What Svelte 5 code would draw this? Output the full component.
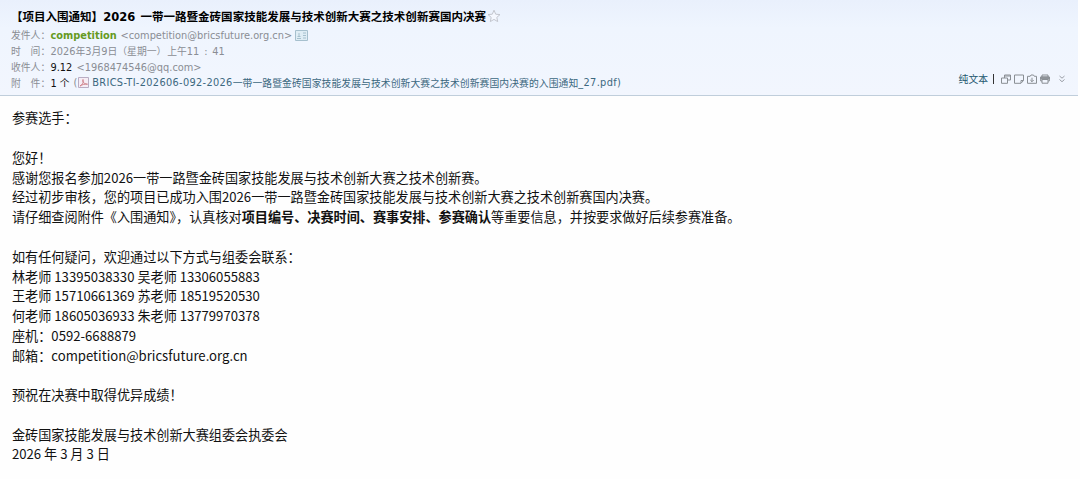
<script lang="ts">
    const body = [
        '参赛选手：',
        '',
        '您好！',
        '感谢您报名参加2026一带一路暨金砖国家技能发展与技术创新大赛之技术创新赛。',
        '经过初步审核，您的项目已成功入围2026一带一路暨金砖国家技能发展与技术创新大赛之技术创新赛国内决赛。'
    ]
    const contact = [
        '',
        '如有任何疑问，欢迎通过以下方式与组委会联系：',
        '林老师 13395038330 吴老师 13306055883',
        '王老师 15710661369 苏老师 18519520530',
        '何老师 18605036933 朱老师 13779970378',
        '座机：0592-6688879',
        '邮箱：competition@bricsfuture.org.cn',
        '',
        '预祝在决赛中取得优异成绩！',
        '',
        '金砖国家技能发展与技术创新大赛组委会执委会',
        '2026 年 3 月 3 日'
    ]
</script>

<div class="mail">
    <header>
        <h1>
            <span class="lead">【项目入围通知】2026</span><span class="subject">一带一路暨金砖国家技能发展与技术创新大赛之技术创新赛国内决赛</span>
            <svg class="star" viewBox="0 0 14 14"><path d="M7 1.2 8.7 5.2 13 5.6 9.8 8.4 10.7 12.6 7 10.4 3.3 12.6 4.2 8.4 1 5.6 5.3 5.2Z" /></svg>
        </h1>
        <div class="row">
            <span class="label">发件人：</span><b class="sender">competition</b><span class="from">&lt;competition@bricsfuture.org.cn&gt;</span>
            <svg class="card" viewBox="0 0 13 11"><path class="fill" d="M.5.5h12v10H.5z" /><path d="M2 8.5h4M4 3v3M2.5 6.5h3M8 3h3M8 5.5h3M8 8h3" /></svg>
        </div>
        <div class="row">
            <span class="label">时　间：</span><span class="date">2026年3月9日（星期一）</span><span class="time">上午11</span><span class="colon">:</span><span>41</span>
        </div>
        <div class="row">
            <span class="label">收件人：</span><span class="name">9.12</span><span class="to">&lt;1968474546@qq.com&gt;</span>
        </div>
        <div class="row last">
            <span class="label">附　件：</span><span class="count">1 个</span><span class="paren">(</span>
            <svg class="pdf" viewBox="0 0 13 13"><path class="page" d="M1.5 1.5h10v10h-10z" /><path class="mark" d="M3 10c3-1.5 3.8-4.3 3-6.5-1.2 2 1 4.5 4.5 4.7C8 7.8 5 8.6 3 10Z" /></svg>
            <span class="file">BRICS-TI-202606-092-2026</span><span class="file cn">一带一路暨金砖国家技能发展与技术创新大赛之技术创新赛国内决赛的入围通知</span><span class="file end">_27.pdf)</span>
            <div class="tools">
                <span class="plain">纯文本</span>
                <i></i>
                <svg viewBox="0 0 10 10"><path d="M3.5 4V1h6v5h-3M.5 4h6v5.3h-6zM3.5 2h6" /></svg>
                <svg viewBox="0 0 10 10"><path d="M.5 1h9v5.5L7 9.3H.5zM9.3 6.5H7V9" /></svg>
                <svg viewBox="0 0 10 10"><path d="M.5 9.3V2.3h2.7L4 1h2.5l.8 1.3h2.2v7zM5 3.7v4M3.3 6 5 7.7 6.7 6" /></svg>
                <svg viewBox="0 0 10 10"><path d="M2 3V1h6v2M2 7H.7V3h8.6v4H8M2 5.5h6v3.7H2z" /><path class="solid" d="M.7 3h8.6v2H.7z" /></svg>
                <svg class="more" viewBox="0 0 10 10"><path d="M2.5 2 5 4.2 7.5 2M2.5 5.5 5 7.7 7.5 5.5" /></svg>
            </div>
        </div>
    </header>

    <main>
        {#each body as line}
            <p>{line}</p>
        {/each}
        <p>请仔细查阅附件《入围通知》，认真核对<b>项目编号、决赛时间、赛事安排、参赛确认</b>等重要信息，并按要求做好后续参赛准备。</p>
        {#each contact as line}
            <p>{line}</p>
        {/each}
    </main>
</div>

<style>
    :global(body) {
        margin: 0;
        background: #fefefe;
    }
    .mail {
        height: 479px;
        overflow: hidden;
        background: #fefefe;
    }
    header {
        box-sizing: border-box;
        width: 1078px;
        height: 96px;
        padding: 6px 0 0 11px;
        border-bottom: 1px solid #c0cedb;
        background: linear-gradient(to bottom, #e9f0fc, #eff5fe 30%, #f2f6fe);
        font-family: "DejaVu Sans", "Noto Sans CJK SC", sans-serif;
        font-size: 9.8px;
        color: #8a8d94;
    }
    h1 {
        display: flex;
        align-items: center;
        height: 20px;
        margin: 0;
        font-size: 11.52px;
        font-weight: bold;
        color: #000;
        white-space: nowrap;
    }
    .lead {
        width: 129.5px;
    }
    .star {
        width: 14px;
        height: 14px;
        margin-left: 1px;
        fill: #f5f8ff;
        stroke: #c3c6ce;
    }
    .row {
        display: flex;
        align-items: center;
        height: 16px;
        white-space: nowrap;
    }
    .row:nth-of-type(1) {
        margin-top: 1px;
    }
    .row.last {
        height: 15px;
    }
    .label {
        width: 39.5px;
    }
    .sender {
        width: 70px;
        color: #669a22;
    }
    .from {
        width: 174px;
    }
    .card {
        width: 13px;
        height: 11px;
        fill: none;
        stroke: #a6c0ce;
    }
    .card .fill {
        fill: #dfedf5;
    }
    .time {
        margin-left: 1px;
    }
    .colon {
        width: 13px;
        text-align: center;
    }
    .name {
        width: 26px;
        color: #111;
    }
    .count {
        width: 23px;
        color: #111;
    }
    .pdf {
        width: 13px;
        height: 13px;
        margin-right: 2px;
        fill: none;
    }
    .page {
        fill: #f6edf5;
        stroke: #b9adc3;
    }
    .mark {
        stroke: #d0848d;
    }
    .file {
        letter-spacing: .32px;
        color: #3c687f;
    }
    .cn {
        letter-spacing: .08px;
    }
    .tools {
        display: flex;
        align-items: center;
        gap: 3px;
        margin: -7px 11px 0 auto;
    }
    .plain {
        color: #23566e;
    }
    .tools i {
        width: 1px;
        height: 10px;
        margin: 0 4px 0 2px;
        background: #333;
    }
    .tools svg {
        width: 10px;
        height: 10px;
        fill: none;
        stroke: #8a8f94;
    }
    .tools .solid {
        fill: #92979d;
    }
    .tools .more {
        margin-left: 4px;
        stroke: #9a9ea6;
    }
    main {
        padding: 12.4px 12px 0;
        font-family: "Noto Sans CJK SC", sans-serif;
        font-size: 13.14px;
        line-height: 19.77px;
        color: #111;
    }
    p {
        height: 19.77px;
        margin: 0;
        white-space: nowrap;
    }
</style>
